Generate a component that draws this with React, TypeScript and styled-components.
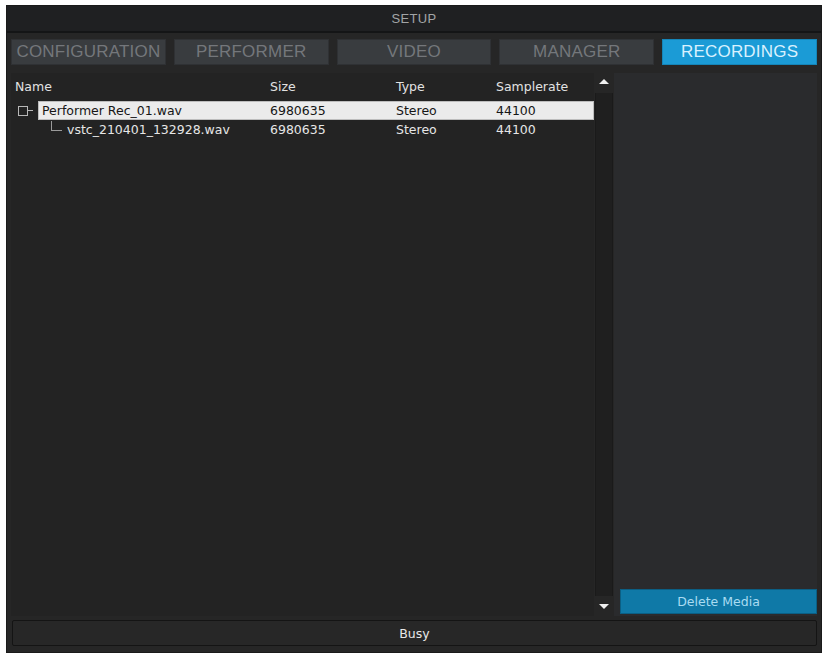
import React from "react";
import styled, { createGlobalStyle } from "styled-components";

const Global = createGlobalStyle`
  html, body { margin: 0; padding: 0; background: #ffffff; }
  body { font-family: "Liberation Sans", Arial, sans-serif; }
`;

const Frame = styled.div`
  margin: 5px 0 0 6px;
  width: 816px;
  height: 648px;
  background: #262626;
  display: flex;
  flex-direction: column;
  box-sizing: border-box;
  border: 1px solid #1a1a1a;
`;

const TitleBar = styled.div`
  height: 25px;
  background: #1f2022;
  border-bottom: 2px solid #141516;
  display: flex;
  align-items: center;
  justify-content: center;
  color: #a2a4a6;
  font-size: 13px;
  letter-spacing: 0.3px;
`;

const Tabs = styled.div`
  display: flex;
  gap: 8px;
  padding: 6px 4px 0 4px;
`;

const Tab = styled.div<{ $active?: boolean }>`
  flex: 1;
  height: 26px;
  display: flex;
  align-items: center;
  justify-content: center;
  font-size: 17px;
  letter-spacing: 0.2px;
  background: ${(p) => (p.$active ? "#1b9bd6" : "#393c3f")};
  color: ${(p) => (p.$active ? "#d9f1ff" : "#74777b")};
  border: 1px solid ${(p) => (p.$active ? "#1585b8" : "#2f3134")};
  box-sizing: border-box;
`;

const Body = styled.div`
  flex: 1;
  display: flex;
  padding: 8px 4px 0 4px;
  min-height: 0;
`;

const ListArea = styled.div`
  width: 583px;
  display: flex;
  flex-direction: column;
  padding-top: 2px;
  background: #232323;
  font-family: "DejaVu Sans", Verdana, sans-serif;
  font-size: 12.5px;
`;

const columns = "255px 126px 100px 1fr";

const HeaderRow = styled.div`
  display: grid;
  grid-template-columns: ${columns};
  height: 25px;
  align-items: center;
  padding: 0 0 2px 4px;
  box-sizing: border-box;
  color: #e2e2e2;
`;

const Row = styled.div`
  display: grid;
  grid-template-columns: ${columns};
  height: 19px;
  align-items: center;
  padding-left: 4px;
  color: #e6e6e6;
  position: relative;
`;

const NameCell = styled.div<{ $indent: number }>`
  display: flex;
  align-items: center;
  height: 100%;
  padding-left: ${(p) => p.$indent}px;
  white-space: nowrap;
`;

const Cell = styled.div`
  height: 100%;
  display: flex;
  align-items: center;
`;

const SelectedRow = styled(Row)`
  margin-top: 1px;
  &::before {
    content: "";
    position: absolute;
    left: 27px;
    right: 0;
    top: 0;
    bottom: 0;
    background: #ebebeb;
    border: 1px solid #bdbdbd;
    box-sizing: border-box;
  }
  & > * {
    position: relative;
    color: #161616;
  }
`;

const TreeBox = styled.span`
  width: 8px;
  height: 8px;
  border: 1px solid #b8b8b8;
  margin: 0 14px 0 3px;
  display: inline-block;
  position: relative;
  &::after {
    content: "";
    position: absolute;
    left: 9px;
    top: 3px;
    width: 5px;
    border-top: 1px solid #b8b8b8;
  }
`;

const TreeLine = styled.span`
  width: 10px;
  height: 9px;
  border-left: 1px solid #9a9a9a;
  border-bottom: 1px solid #9a9a9a;
  margin: -8px 5px 0 0;
  display: inline-block;
`;

const Scrollbar = styled.div`
  width: 20px;
  display: flex;
  flex-direction: column;
  align-items: center;
  background: #262626;
`;

const ArrowBtn = styled.div<{ $down?: boolean }>`
  height: ${(p) => (p.$down ? 20 : 16)}px;
  width: 20px;
  display: flex;
  align-items: center;
  justify-content: center;
  &::after {
    content: "";
    border-left: 5px solid transparent;
    border-right: 5px solid transparent;
    ${(p) =>
      p.$down ? "border-top: 5px solid #f0f0f0;" : "border-bottom: 5px solid #f0f0f0;"}
  }
`;

const Track = styled.div`
  flex: 1;
  width: 18px;
  margin-top: 4px;
  background: #1f1f1f;
  border-left: 1px solid #1a1a1a;
  border-right: 1px solid #1a1a1a;
  box-sizing: border-box;
`;

const SidePanel = styled.div`
  flex: 1;
  display: flex;
  flex-direction: column;
  justify-content: flex-end;
  background: #2a2b2d;
  padding: 0 0 2px 6px;
`;

const DeleteButton = styled.div`
  height: 25px;
  background: #0f79a7;
  border: 1px solid #0b5f84;
  box-sizing: border-box;
  display: flex;
  align-items: center;
  justify-content: center;
  color: #a9dcf2;
  font-family: "DejaVu Sans", Verdana, sans-serif;
  font-size: 12.5px;
`;

const StatusBar = styled.div`
  margin: 4px 4px 6px 5px;
  height: 26px;
  border: 1px solid #141414;
  border-radius: 2px;
  background: #272727;
  box-sizing: border-box;
  display: flex;
  align-items: center;
  justify-content: center;
  color: #e8e8e8;
  font-family: "DejaVu Sans", Verdana, sans-serif;
  font-size: 12.5px;
`;

const tabs = ["CONFIGURATION", "PERFORMER", "VIDEO", "MANAGER", "RECORDINGS"];

export default function App() {
  return (
    <>
      <Global />
      <Frame>
        <TitleBar>SETUP</TitleBar>
        <Tabs>
          {tabs.map((t) => (
            <Tab key={t} $active={t === "RECORDINGS"}>
              {t}
            </Tab>
          ))}
        </Tabs>
        <Body>
          <ListArea>
            <HeaderRow>
              <Cell>Name</Cell>
              <Cell>Size</Cell>
              <Cell>Type</Cell>
              <Cell>Samplerate</Cell>
            </HeaderRow>
            <SelectedRow>
              <NameCell $indent={0}>
                <TreeBox />
                Performer Rec_01.wav
              </NameCell>
              <Cell>6980635</Cell>
              <Cell>Stereo</Cell>
              <Cell>44100</Cell>
            </SelectedRow>
            <Row>
              <NameCell $indent={36}>
                <TreeLine />
                vstc_210401_132928.wav
              </NameCell>
              <Cell>6980635</Cell>
              <Cell>Stereo</Cell>
              <Cell>44100</Cell>
            </Row>
          </ListArea>
          <Scrollbar>
            <ArrowBtn />
            <Track />
            <ArrowBtn $down />
          </Scrollbar>
          <SidePanel>
            <DeleteButton>Delete Media</DeleteButton>
          </SidePanel>
        </Body>
        <StatusBar>Busy</StatusBar>
      </Frame>
    </>
  );
}
